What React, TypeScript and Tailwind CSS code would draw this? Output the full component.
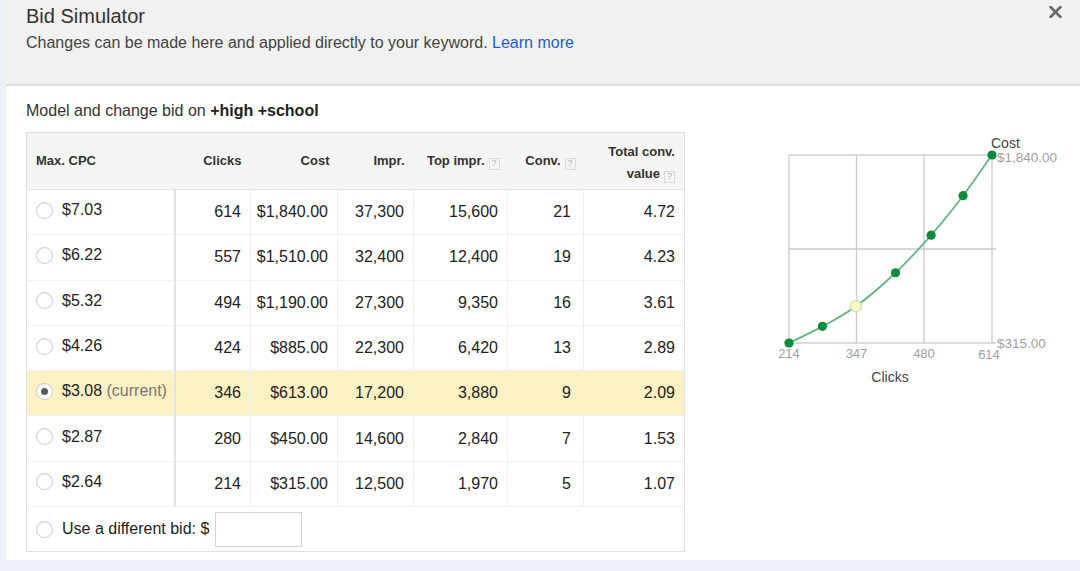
import React from "react";

type Row = {
  bid: string;
  clicks: string;
  cost: string;
  impr: string;
  top: string;
  conv: string;
  value: string;
  current?: boolean;
};

const rows: Row[] = [
  { bid: "$7.03", clicks: "614", cost: "$1,840.00", impr: "37,300", top: "15,600", conv: "21", value: "4.72" },
  { bid: "$6.22", clicks: "557", cost: "$1,510.00", impr: "32,400", top: "12,400", conv: "19", value: "4.23" },
  { bid: "$5.32", clicks: "494", cost: "$1,190.00", impr: "27,300", top: "9,350", conv: "16", value: "3.61" },
  { bid: "$4.26", clicks: "424", cost: "$885.00", impr: "22,300", top: "6,420", conv: "13", value: "2.89" },
  { bid: "$3.08", clicks: "346", cost: "$613.00", impr: "17,200", top: "3,880", conv: "9", value: "2.09", current: true },
  { bid: "$2.87", clicks: "280", cost: "$450.00", impr: "14,600", top: "2,840", conv: "7", value: "1.53" },
  { bid: "$2.64", clicks: "214", cost: "$315.00", impr: "12,500", top: "1,970", conv: "5", value: "1.07" },
];

function Radio({ checked }: { checked?: boolean }) {
  return (
    <span className="inline-flex items-center justify-center w-[17px] h-[17px] rounded-full border border-[#cbcbcb] bg-white shrink-0 shadow-[inset_0_1px_1px_rgba(0,0,0,0.06)]">
      {checked && <span className="block w-[7px] h-[7px] rounded-full bg-[#5a5a5a]" />}
    </span>
  );
}

function Help() {
  return (
    <span className="inline-flex items-center justify-center w-[11px] h-[12px] border border-[#d9d9d9] text-[9px] leading-none font-normal text-[#b0b0b0] ml-[4px] align-[-1px]">
      ?
    </span>
  );
}

function Chart() {
  const X = (c: number) => 28 + ((c - 214) * 203) / 400;
  const Y = (v: number) => 211 - ((v - 315) * 188) / 1525;
  const pts = [
    [214, 315],
    [280, 450],
    [346, 613],
    [424, 885],
    [494, 1190],
    [557, 1510],
    [614, 1840],
  ].map(([c, v]) => [X(c), Y(v)]);
  const d = pts
    .map((p, i) => {
      if (i === 0) return `M${p[0]},${p[1]}`;
      const p0 = pts[i - 1];
      const pPrev = pts[i - 2] || p0;
      const pNext = pts[i + 1] || p;
      const c1x = p0[0] + (p[0] - pPrev[0]) / 6;
      const c1y = p0[1] + (p[1] - pPrev[1]) / 6;
      const c2x = p[0] - (pNext[0] - p0[0]) / 6;
      const c2y = p[1] - (pNext[1] - p0[1]) / 6;
      return `C${c1x},${c1y} ${c2x},${c2y} ${p[0]},${p[1]}`;
    })
    .join(" ");
  return (
    <svg width="300" height="260" viewBox="0 0 300 260" className="block shrink-0">
      <g stroke="#cacaca" strokeWidth="1.3" fill="none">
        <rect x="28" y="23" width="203" height="188" />
        <line x1="95.5" y1="23" x2="95.5" y2="211" />
        <line x1="163" y1="23" x2="163" y2="211" />
        <line x1="28" y1="117" x2="235" y2="117" />
        <line x1="231" y1="211" x2="235" y2="211" />
      </g>
      <path d={d} stroke="#68b384" strokeWidth="1.8" fill="none" />
      {pts.map((p, i) =>
        i === 2 ? (
          <circle key={i} cx={p[0]} cy={p[1]} r="5.5" fill="#fbf9c9" stroke="#cfdca6" strokeWidth="1.2" />
        ) : (
          <circle key={i} cx={p[0]} cy={p[1]} r="4.6" fill="#0c8a3e" />
        )
      )}
      <g fontFamily="'Liberation Sans', Arial, sans-serif" fontSize="13" fill="#a0a0a0" textAnchor="middle">
        <text x="28" y="226">214</text>
        <text x="95.5" y="226">347</text>
        <text x="163" y="226">480</text>
        <text x="228" y="227">614</text>
      </g>
      <g fontFamily="'Liberation Sans', Arial, sans-serif" fontSize="13.5" fill="#a0a0a0">
        <text x="236" y="216">$315.00</text>
        <text x="236" y="30">$1,840.00</text>
      </g>
      <g fontFamily="'Liberation Sans', Arial, sans-serif" fontSize="14" fill="#444">
        <text x="230" y="16">Cost</text>
        <text x="129" y="250" textAnchor="middle">Clicks</text>
      </g>
    </svg>
  );
}

export default function App() {
  const td = "border-r border-[#efefef] text-right pr-[9px]";
  return (
    <div className="w-[1080px] h-[571px] bg-[#edf1f7] pl-[6px] font-['Liberation_Sans',Arial,sans-serif] overflow-hidden">
      <div className="h-[560px] bg-white">
        <div className="h-[86px] bg-[#f1f1f1] border-b-2 border-[#dedede] flex justify-between">
          <div className="pl-[20px]">
            <div className="pt-[4px] text-[20px] leading-[24px] text-[#333]">Bid Simulator</div>
            <div className="mt-[6px] text-[16px] leading-[18px] text-[#444]">
              Changes can be made here and applied directly to your keyword.{" "}
              <span className="text-[#1f5fcc]">Learn more</span>
            </div>
          </div>
          <div className="pr-[18px] pt-[6px]">
            <svg width="13" height="12" viewBox="0 0 13 12">
              <path d="M1.5 1 L11.5 11 M11.5 1 L1.5 11" stroke="#6a6a6a" strokeWidth="2.6" strokeLinecap="round" />
            </svg>
          </div>
        </div>
        <div className="pl-[20px] pt-[15px]">
          <div className="text-[16px] leading-[20px] text-[#333]">
            Model and change bid on <span className="font-bold text-[#222]">+high +school</span>
          </div>
          <div className="flex mt-[11px]">
            <table className="table-fixed border-collapse w-[658px] border border-[#dfdfdf]">
              <colgroup>
                <col className="w-[148px]" />
                <col className="w-[76px]" />
                <col className="w-[87px]" />
                <col className="w-[76px]" />
                <col className="w-[94px]" />
                <col className="w-[76px]" />
                <col className="w-[101px]" />
              </colgroup>
              <thead>
                <tr className="h-[57px] bg-[#f5f5f5] border-b border-[#e4e4e4] text-[13px] font-bold text-[#333]">
                  <th className="text-left pl-[9px] font-bold">Max. CPC</th>
                  <th className="text-right pr-[9px] font-bold">Clicks</th>
                  <th className="text-right pr-[8px] font-bold">Cost</th>
                  <th className="text-right pr-[9px] font-bold">Impr.</th>
                  <th className="text-right pr-[8px] font-bold whitespace-nowrap">
                    Top impr.<Help />
                  </th>
                  <th className="text-right pr-[8px] font-bold whitespace-nowrap">
                    Conv.<Help />
                  </th>
                  <th className="text-right pr-[9px] pt-[4px] font-bold leading-[22px]">
                    Total conv.
                    <br />
                    value<Help />
                  </th>
                </tr>
              </thead>
              <tbody className="text-[16px] text-[#222]">
                {rows.map((r) => (
                  <tr
                    key={r.bid}
                    className={`h-[45.3px] border-b border-[#f1f1f1] ${r.current ? "bg-[#fcf1c2]" : "bg-white"}`}
                  >
                    <td className="border-r-2 border-[#e2e2e2] pl-[9px] pb-[4px]">
                      <div className="flex items-center gap-[9px]">
                        <Radio checked={r.current} />
                        <span>
                          {r.bid}
                          {r.current && <span className="text-[#777]"> (current)</span>}
                        </span>
                      </div>
                    </td>
                    <td className={td}>{r.clicks}</td>
                    <td className={`${td} pr-[8px]`}>{r.cost}</td>
                    <td className={td}>{r.impr}</td>
                    <td className={td}>{r.top}</td>
                    <td className={`${td} pr-[12px]`}>{r.conv}</td>
                    <td className="text-right pr-[9px]">{r.value}</td>
                  </tr>
                ))}
                <tr className="h-[45px]">
                  <td colSpan={7} className="pl-[9px]">
                    <div className="flex items-center gap-[9px]">
                      <Radio />
                      <span>Use a different bid: $</span>
                      <span className="block w-[87px] h-[35px] border border-[#d4d4d4] bg-white -ml-[3px]" />
                    </div>
                  </td>
                </tr>
              </tbody>
            </table>
            <div className="ml-[76px]">
              <Chart />
            </div>
          </div>
        </div>
      </div>
    </div>
  );
}
